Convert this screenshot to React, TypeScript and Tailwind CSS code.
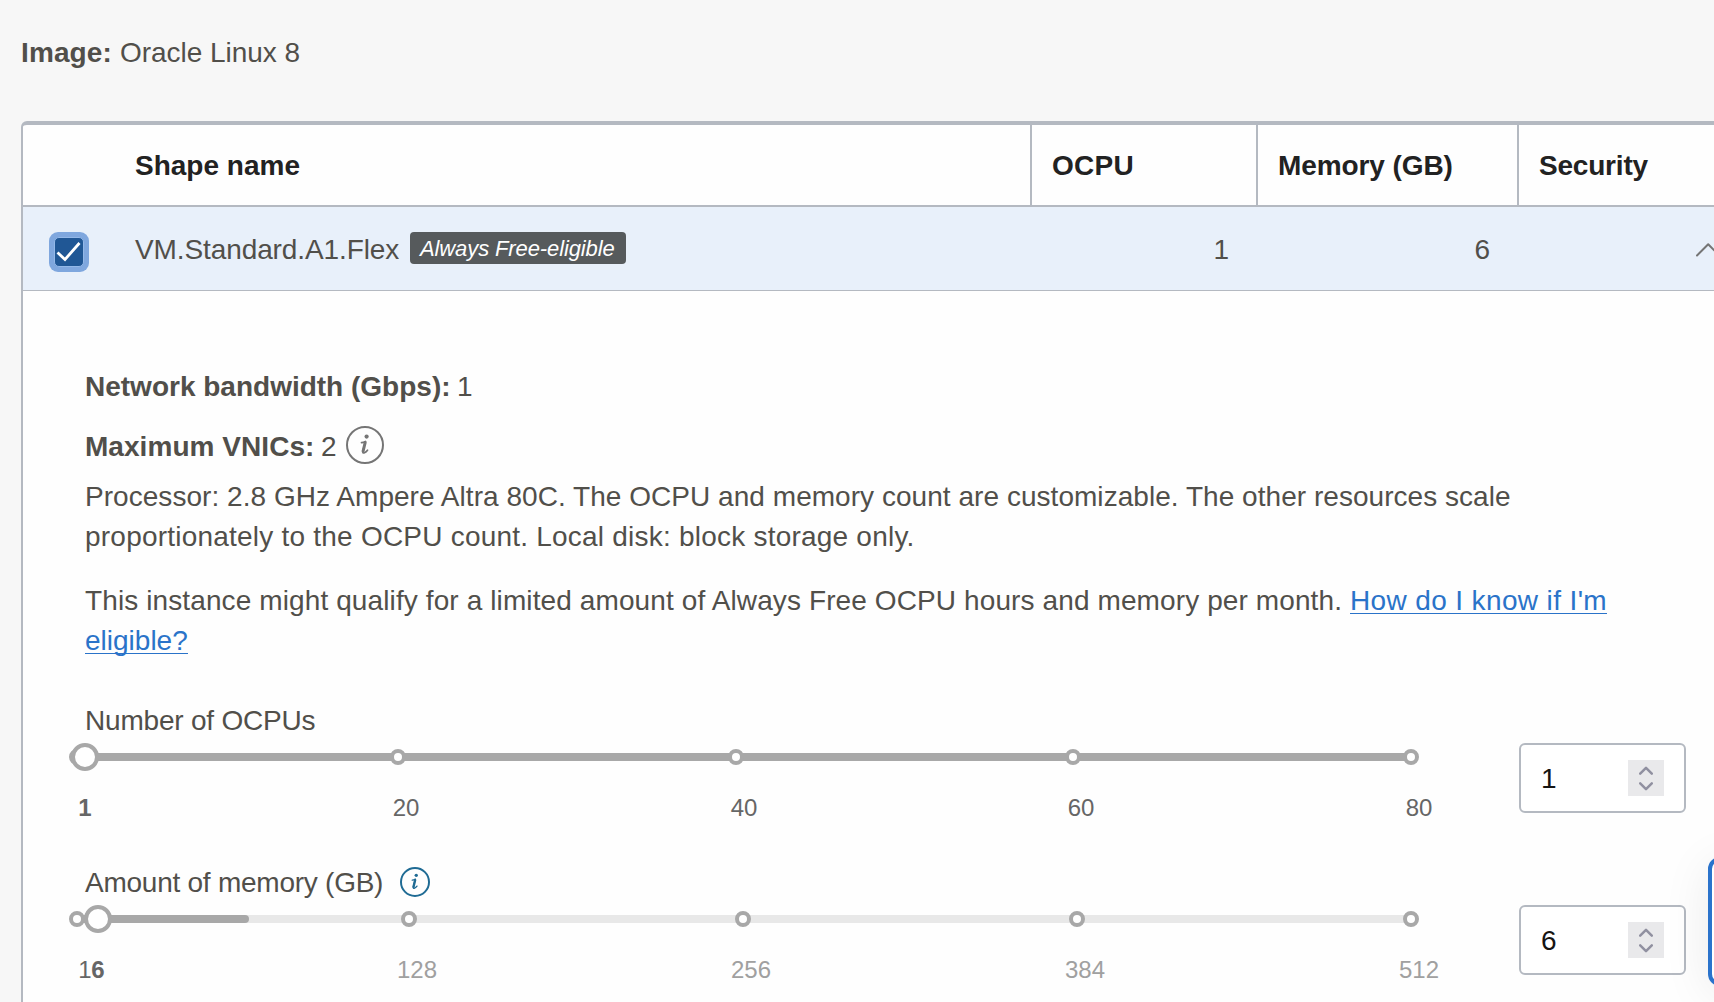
import React from "react";

type Tick = {
  at: number;
  labelAt: number;
  label: string;
  tone: string;
};

const TRACK = 1350;
const pct = (v: number) => `${(v / TRACK) * 100}%`;

function InfoIcon({ size, className, stroke }: { size: number; className: string; stroke: number }) {
  return (
    <svg width={size} height={size} viewBox="0 0 38 38" fill="none" className={className}>
      <circle cx="19" cy="19" r={19 - stroke / 2} stroke="currentColor" strokeWidth={stroke} />
      <circle cx="20.600" cy="10.600" r="2.1" fill="currentColor" />
      <path
        d="M15.500 16.700c1.500-.1 2.800-.6 4-1.300l-2.600 9.600c-.4 1.900.3 2.300 1.600 1.700 1.200-.5 2.200-1.400 3-2.500"
        stroke="currentColor"
        strokeWidth="1.7"
        strokeLinecap="round"
        strokeLinejoin="round"
      />
      <path d="M19.200 16.500l-2.100 8.700" stroke="currentColor" strokeWidth="3" strokeLinecap="round" />
    </svg>
  );
}

function NumberInput({ value }: { value: string }) {
  return (
    <div className="mt-[42px] flex h-[70px] w-[167px] shrink-0 items-center justify-between rounded-md border-2 border-[#b4b9c1] bg-white pr-5 pl-5 text-[28px] leading-10 text-[#161513]">
      <span className="pt-0.5">{value}</span>
      <div className="flex size-9 items-center justify-center bg-[#e9e9eb]">
        <svg width="14" height="25" viewBox="0 0 14 25" fill="none" stroke="#9090a0" strokeWidth="2.500" strokeLinecap="round" strokeLinejoin="round">
          <path d="M1.200 7.600 7 1.800l5.800 5.800M1.200 17.400 7 23.200l5.800-5.800" />
        </svg>
      </div>
    </div>
  );
}

function Slider({ ticks, thumb, fill }: { ticks: Tick[]; thumb: number; fill: number }) {
  return (
    <div>
      <div className="relative mt-0.5 flex h-7 items-center px-2">
        <div className="h-2 w-full rounded-full bg-[#e8e8e8]">
          <div className="h-2 rounded-full bg-[#a8a8a8]" style={{ width: `${fill}%` }} />
        </div>
        {ticks.map((t) =>
          t.at < 0 ? null : (
            <span
              key={t.at}
              className="absolute top-1.5 size-4 -translate-x-1/2 rounded-full border-4 border-[#a8a8a8] bg-white"
              style={{ left: pct(t.at) }}
            />
          )
        )}
        <span
          className="absolute top-0 size-7 -translate-x-1/2 rounded-full border-4 border-[#a8a8a8] bg-white"
          style={{ left: pct(thumb) }}
        />
      </div>
      <div className="relative mt-[21px] h-8 text-2xl leading-8">
        {ticks.map((t) => (
          <span key={t.label} className={`absolute top-0 -translate-x-1/2 ${t.tone}`} style={{ left: pct(t.labelAt) }}>
            {t.label}
          </span>
        ))}
      </div>
    </div>
  );
}

const on = "text-[#666666]";
const current = "font-bold text-[#666666]";
const off = "text-[#a0a0a0]";

const cpuTicks: Tick[] = [
  { at: 8, labelAt: 16, label: "1", tone: current },
  { at: 329, labelAt: 337, label: "20", tone: on },
  { at: 667, labelAt: 675, label: "40", tone: on },
  { at: 1004, labelAt: 1012, label: "60", tone: on },
  { at: 1342, labelAt: 1350, label: "80", tone: on },
];

const memoryTicks: Tick[] = [
  { at: 8, labelAt: 16, label: "1", tone: on },
  { at: -1, labelAt: 29, label: "6", tone: current },
  { at: 340, labelAt: 348, label: "128", tone: off },
  { at: 674, labelAt: 682, label: "256", tone: off },
  { at: 1008, labelAt: 1016, label: "384", tone: off },
  { at: 1342, labelAt: 1350, label: "512", tone: off },
];

export default function App() {
  return (
    <div className="relative h-[1002px] w-[1714px] overflow-hidden bg-[#f7f7f7] pt-[33px] pl-[21px] font-['Liberation_Sans',Arial,sans-serif] text-[28px] leading-10 whitespace-nowrap text-[#514f4a]">
      <p className="flex">
        <span className="w-[99px] font-bold tracking-[0.1px]">Image:</span>
        <span className="tracking-[-0.04px]">Oracle Linux 8</span>
      </p>

      <section className="mt-12 h-[900px] overflow-hidden rounded-tl-[6px] border-t-4 border-l-2 border-[#b4b9c1] bg-[#fefefe]">
        <div className="flex h-[82px] items-stretch font-bold text-[#222222]">
          <div className="flex w-[1009px] items-center border-b-2 border-[#b4b9c1] pt-0.5 pl-28">Shape name</div>
          <div className="-ml-0.5 flex w-[226px] items-center border-b-2 border-l-2 border-[#b4b9c1] pt-0.5 pl-5 tracking-[0.3px]">OCPU</div>
          <div className="flex w-[261px] items-center border-b-2 border-l-2 border-[#b4b9c1] pt-0.5 pl-5 tracking-[-0.09px]">Memory (GB)</div>
          <div className="flex grow items-center border-b-2 border-l-2 border-[#b4b9c1] pt-0.5 pl-5 tracking-[-0.2px]">Security</div>
        </div>

        <div className="flex h-[84px] items-center border-b border-[#b4b9c1] bg-[#e8f0fa]">
          <div className="flex w-28 pt-[7px] pl-[26px]">
            <div className="flex size-10 items-center justify-center rounded-[9px] bg-[#7fa7de]">
              <div className="flex size-[30px] items-center justify-center rounded-[5px] border border-[#93b8e8] bg-[#205795]">
                <svg width="26" height="22" viewBox="0 0 26 22" fill="none" stroke="#fff" strokeWidth="2.800">
                  <path d="M1.500 11.500 9 18.500 23.500 2" />
                </svg>
              </div>
            </div>
          </div>
          <div className="flex w-[895px] items-center">
            <span className="w-[275px] pt-0.5 tracking-[-0.1px]">VM.Standard.A1.Flex</span>
            <span className="-mt-px h-8 w-[216px] rounded bg-[#565a5c] pt-px pl-2.5 text-[22px] leading-8 tracking-[-0.11px] text-white italic">
              Always Free-eligible
            </span>
          </div>
          <div className="w-[226px] pt-0.5 pr-[27px] text-right">1</div>
          <div className="w-[261px] pt-0.5 pr-[27px] text-right">6</div>
          <div className="flex grow justify-end pt-0.5">
            <svg width="18" height="14" viewBox="0 0 18 14" fill="none" stroke="#757575" strokeWidth="2" strokeLinecap="round" strokeLinejoin="round">
              <path d="M1 12.500 12.200 1.200 23.400 12.500" />
            </svg>
          </div>
        </div>

        <div className="pt-[76px] pl-[62px]">
          <p className="flex">
            <span className="w-[372px] font-bold">Network bandwidth (Gbps):</span>
            <span>1</span>
          </p>
          <p className="mt-5 flex">
            <span className="w-[236px] font-bold tracking-[0.05px]">Maximum VNICs:</span>
            <span className="w-[25px]">2</span>
            <InfoIcon size={38} stroke={2} className="-mt-px text-[#757575]" />
          </p>
          <div className="mt-2.5">
            <p className="tracking-[0.04px]">
              Processor: 2.8 GHz Ampere Altra 80C. The OCPU and memory count are customizable. The other resources scale
            </p>
            <p className="tracking-[0.22px]">proportionately to the OCPU count. Local disk: block storage only.</p>
          </div>
          <div className="mt-6">
            <p className="flex h-10">
              <span className="w-[1265px] tracking-[0.11px]">
                This instance might qualify for a limited amount of Always Free OCPU hours and memory per month.
              </span>
              <a className="h-[33px] border-b border-[#2a73c9] tracking-[0.37px] text-[#2a73c9]">How do I know if I'm</a>
            </p>
            <p className="flex h-10">
              <a className="h-[33px] border-b border-[#2a73c9] text-[#2a73c9]">eligible?</a>
            </p>
          </div>
        </div>

        <div className="mt-10 flex h-[162px] pl-[46px]">
          <div className="w-[1350px]">
            <p className="pl-4 tracking-[-0.2px]">Number of OCPUs</p>
            <Slider ticks={cpuTicks} thumb={16} fill={100} />
          </div>
          <div className="pl-[100px]">
            <NumberInput value="1" />
          </div>
        </div>
        <div className="flex h-[162px] pl-[46px]">
          <div className="w-[1350px]">
            <p className="flex pl-4">
              <span className="w-[315px] tracking-[-0.25px]">Amount of memory (GB)</span>
              <InfoIcon size={30} stroke={2.5} className="mt-1 text-[#1f6b94]" />
            </p>
            <Slider ticks={memoryTicks} thumb={29} fill={12.9} />
          </div>
          <div className="pl-[100px]">
            <NumberInput value="6" />
          </div>
        </div>
      </section>

      <div className="absolute top-[857px] left-[1708px] h-[129px] w-32 rounded-xl border-4 border-[#2a73cc] bg-white shadow-[0_8px_48px_rgba(0,0,0,0.08)]" />
    </div>
  );
}
